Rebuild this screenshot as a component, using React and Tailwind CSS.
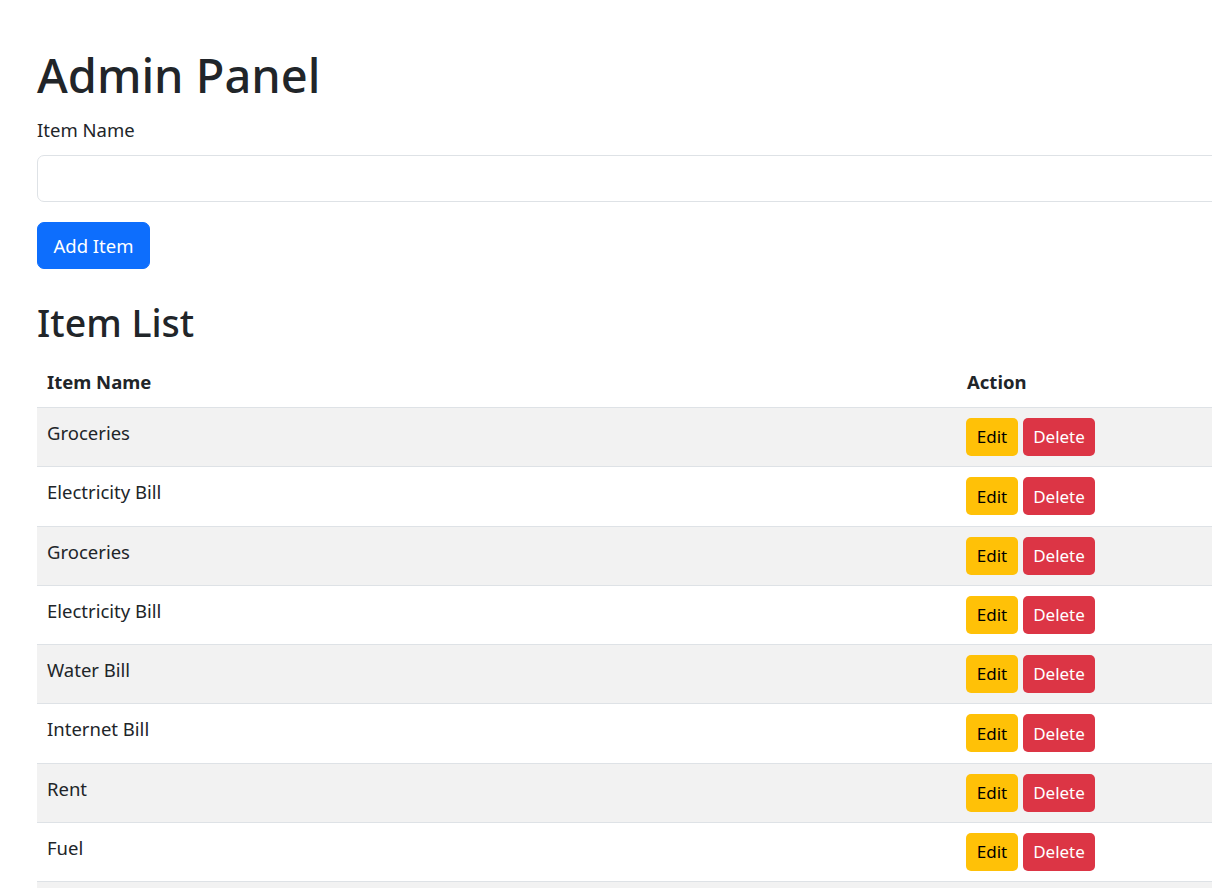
import React from 'react';

const items = [
  'Groceries',
  'Electricity Bill',
  'Groceries',
  'Electricity Bill',
  'Water Bill',
  'Internet Bill',
  'Rent',
  'Fuel',
  'Groceries',
];

const App = () => {
  return (
    <div className="w-[1212px] h-[888px] overflow-hidden bg-white text-[#212529] font-['Noto_Sans',sans-serif]">
      <div className="w-[1500px] pl-[37px] pt-[45px]">
        <h1 className="text-[47px] leading-[60px] font-medium mb-[10px]">Admin Panel</h1>

        <label className="block text-[18.5px] leading-[30px] mb-[10px]">Item Name</label>
        <input
          type="text"
          className="block w-full h-[47px] px-[15px] border border-[#dee2e6] rounded-[7px] outline-none text-[18.5px]"
        />

        <button className="mt-[20px] h-[47px] w-[113px] bg-[#0d6efd] text-white text-[18.5px] rounded-[7px] border border-[#0d6efd]">
          Add Item
        </button>

        <h2 className="mt-[30px] text-[37.5px] leading-[48px] font-medium mb-[10px]">Item List</h2>

        <div className="w-full text-[18.5px]">
          <div className="grid grid-cols-[920px_1fr] border-b border-[#dee2e6]">
            <div className="px-[10px] py-[10px] leading-[30px] font-bold">Item Name</div>
            <div className="px-[10px] py-[10px] leading-[30px] font-bold">Action</div>
          </div>
          {items.map((name, i) => (
            <div
              key={i}
              className={`grid grid-cols-[920px_1fr] border-b border-[#dee2e6] ${i % 2 === 0 ? 'bg-[#f2f2f2]' : 'bg-white'}`}
            >
              <div className="px-[10px] py-[10.125px] leading-[30px]">{name}</div>
              <div className="pl-[9px] pr-[10px] py-[10.125px] flex gap-[5px]">
                <button className="h-[38px] w-[52px] bg-[#ffc107] text-black text-[17px] rounded-[5px]">Edit</button>
                <button className="h-[38px] w-[72px] bg-[#dc3545] text-white text-[17px] rounded-[5px]">Delete</button>
              </div>
            </div>
          ))}
        </div>
      </div>
    </div>
  );
};

export default App;
